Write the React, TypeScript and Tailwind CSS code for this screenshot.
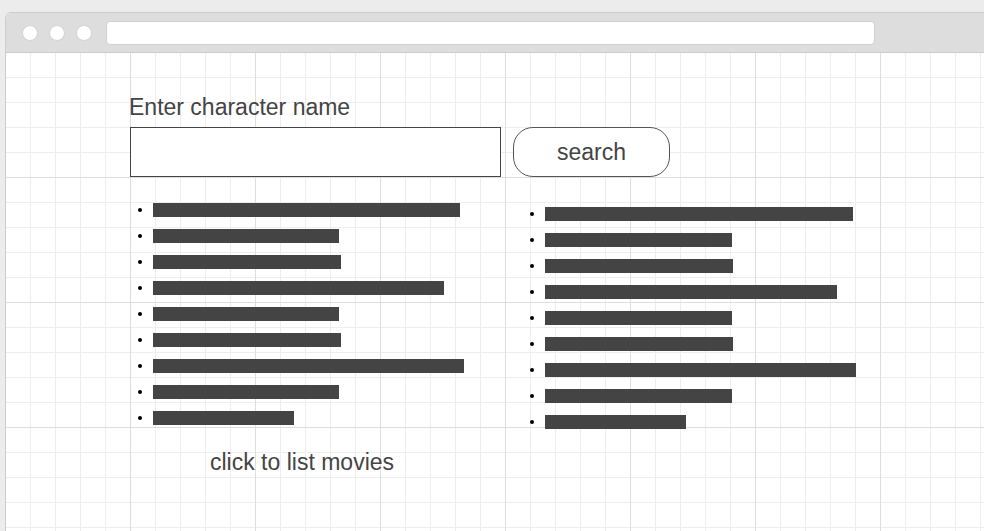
import React from 'react';

const leftBars = [307, 186, 188, 291, 186, 188, 311, 186, 141];
const rightBars = [308, 187, 188, 292, 187, 188, 311, 187, 141];

const BarList: React.FC<{ widths: number[] }> = ({ widths }) => (
  <ul className="flex flex-col">
    {widths.map((w, i) => (
      <li key={i} className="flex items-center h-[26px] pl-[8px]">
        <span className="w-[4px] h-[4px] rounded-full bg-black shrink-0" />
        {/* placeholder line for a list entry */}
        <span className="ml-[11px] h-[14px] bg-[#444444]" style={{ width: `${w}px` }} />
      </li>
    ))}
  </ul>
);

export default function App() {
  return (
    <div className="w-[984px] h-[531px] overflow-hidden bg-[#ececec] pt-[12px] pl-[5px] font-['Liberation_Sans',Arial,sans-serif]">
      <div className="w-[1000px] h-[560px] border border-[#cccccc] rounded-t-[6px] overflow-hidden bg-white flex flex-col">
        {/* Browser chrome */}
        <div className="h-[39px] shrink-0 bg-[#dddddd] border-b border-[#cccccc] flex items-center pl-[16px] box-content">
          <div className="flex gap-[11px]">
            <span className="w-[16px] h-[16px] rounded-full bg-white border border-[#d4d4d4]" />
            <span className="w-[16px] h-[16px] rounded-full bg-white border border-[#d4d4d4]" />
            <span className="w-[16px] h-[16px] rounded-full bg-white border border-[#d4d4d4]" />
          </div>
          <div className="ml-[14px] w-[769px] h-[24px] bg-white rounded-[4px] border border-[#d0d0d0]" />
        </div>

        {/* Page with grid paper */}
        <div className="flex-1 bg-white bg-[linear-gradient(to_right,#dedede_1px,transparent_1px),linear-gradient(to_bottom,#dedede_1px,transparent_1px),linear-gradient(to_right,#eeeeee_1px,transparent_1px),linear-gradient(to_bottom,#eeeeee_1px,transparent_1px)] bg-[size:125px_125px,125px_125px,25px_25px,25px_25px] bg-[position:-1px_-1px] text-[#444444]">
          <div className="pl-[123px] pt-[41px]">
            <div className="text-[23px] leading-[26px]">Enter character name</div>

            <div className="flex mt-[7px] ml-[1px] gap-[12px]">
              <div className="w-[371px] h-[50px] border border-[#444444] bg-white" />
              <button className="w-[157px] h-[50px] rounded-[20px] border border-[#555555] bg-white text-[23px] leading-[26px] text-[#444444]">
                search
              </button>
            </div>

            <div className="flex ml-[1px] mt-[20px]">
              <div className="w-[392px]">
                <BarList widths={leftBars} />
                <div className="pl-[80px] mt-[18px] text-[23px] leading-[26px]">click to list movies</div>
              </div>
              <div className="mt-[4px]">
                <BarList widths={rightBars} />
              </div>
            </div>
          </div>
        </div>
      </div>
    </div>
  );
}
